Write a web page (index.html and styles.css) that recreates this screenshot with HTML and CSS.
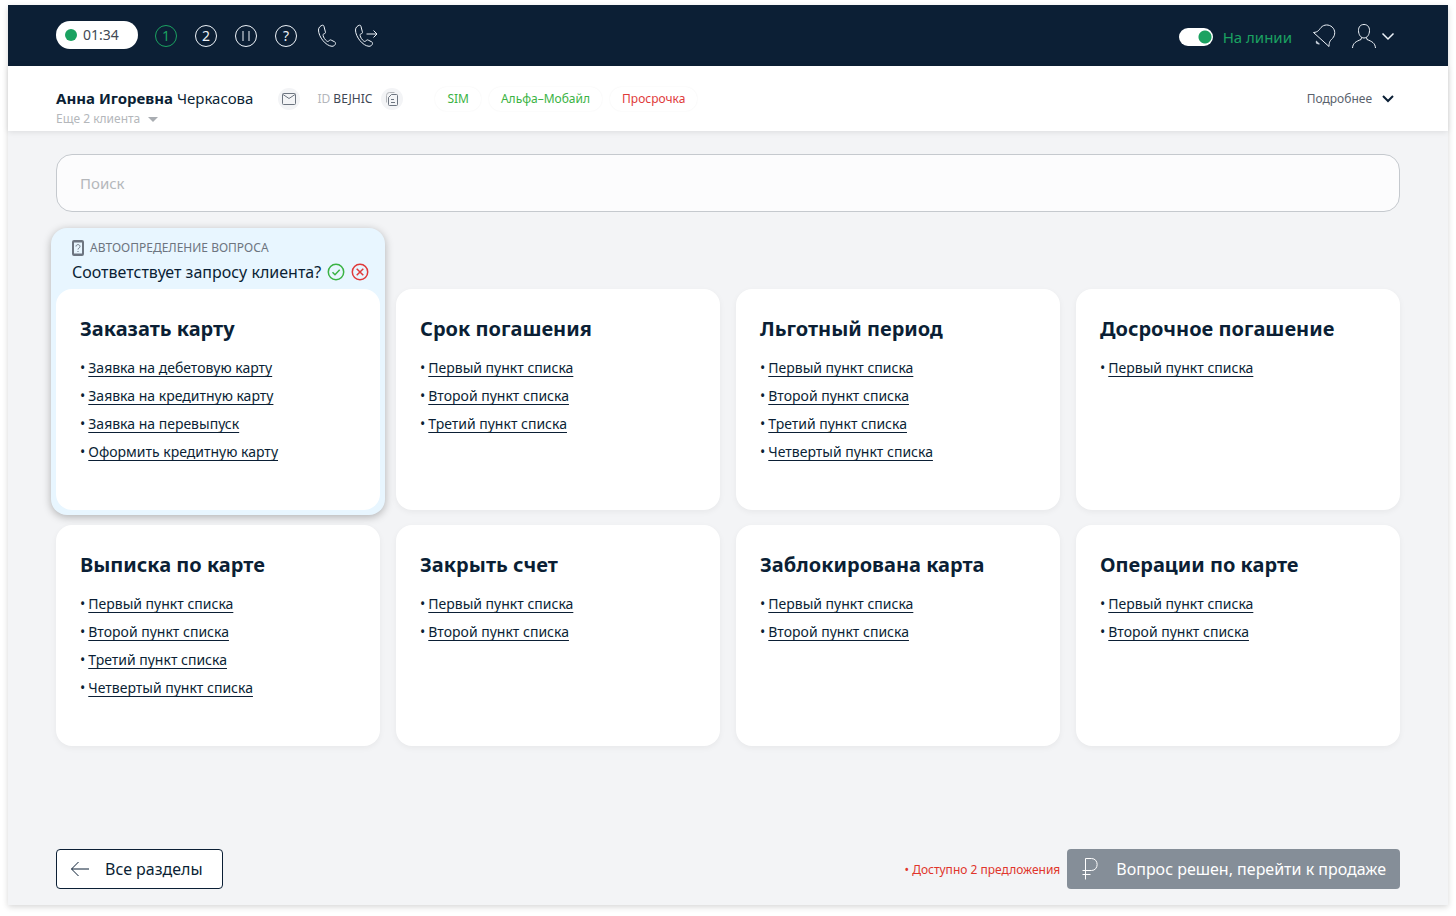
FILE: index.html
```html
<!DOCTYPE html>
<html lang="ru">
<head>
<meta charset="utf-8">
<title>Обращение клиента</title>
<link rel="stylesheet" href="styles.css">
</head>
<body>
<div class="shell">
  <header class="topbar">
    <div class="timer"><span class="timer-dot"></span>01:34</div>
    <nav class="tools" aria-label="Управление звонком">
      <button class="round round-active" type="button">1</button>
      <button class="round" type="button">2</button>
      <button class="round" type="button" aria-label="Пауза"><svg width="12" height="12" viewBox="0 0 12 12"><path d="M3 1v10M9 1v10"/></svg></button>
      <button class="round" type="button">?</button>
      <button class="icon-btn" type="button" aria-label="Телефон"><svg width="24" height="24" viewBox="0 0 24 24"><path d="M7.500 1.200c-2 .5-4 2.200-4 4.800 0 7 7.500 16 13.500 16.300 1.700 0 3.200-1 3.500-2.800.1-.8-.2-1.300-.9-1.700l-3.400-1.700c-1-.5-1.600-.2-2.100.6-.6.900-1.500 1-2.400.3-1.800-1.400-3.200-3.500-3.600-5.500-.2-1 .2-1.600 1.200-1.800 1-.2 1.300-.8 1.100-1.800l-1.300-5c-.2-1.100-.6-1.900-1.600-1.700z"/></svg></button>
      <button class="icon-btn" type="button" aria-label="Перевести звонок"><svg width="24" height="24" viewBox="0 0 24 24"><path d="M5.500 1.200c-2 .5-4 2.200-4 4.800 0 7 7.500 16 13.500 16.300 1.700 0 3.200-1 3.500-2.800.1-.8-.2-1.300-.9-1.700l-3.400-1.700c-1-.5-1.600-.2-2.100.6-.6.900-1.500 1-2.400.3-1.800-1.400-3.200-3.500-3.600-5.500-.2-1 .2-1.600 1.200-1.800 1-.2 1.300-.8 1.100-1.800l-1.300-5c-.2-1.100-.6-1.900-1.600-1.700zM12.500 10h10.500M19.500 6.500 23 10l-3.500 3.500"/></svg></button>
    </nav>
    <label class="line"><input class="line-toggle" type="checkbox" role="switch" checked>На линии</label>
    <button class="icon-btn bell" type="button" aria-label="Уведомления"><svg width="24" height="24" viewBox="0 0 24 24"><path d="M1.500 8.500C6 8.200 7 6 9 3.500c3-3.300 8-3.300 11.200-.4 3.300 3 3.300 8 .3 11.300-2 2-3.500 3.100-3.500 8.100z"/><path class="solid" d="M4.200 16.500c-1.300 2.200.3 4.600 4 3.800z"/></svg></button>
    <button class="icon-btn profile" type="button" aria-label="Профиль"><svg width="44" height="26" viewBox="0 0 44 26"><path d="M13 1.500c3.600 0 5.500 2.500 5.500 6 0 4-2.200 7.500-5.500 7.500s-5.500-3.500-5.500-7.500c0-3.500 1.900-6 5.500-6zM1.500 25c.4-5 3.500-6.500 8.500-8.500l.5-2M24.500 25c-.4-5-3.500-6.500-8.500-8.500l-.5-2"/><path class="chevron" d="m31.500 10.500 5.500 5.500 5.500-5.500"/></svg></button>
  </header>

  <section class="client">
    <div class="client-id">
      <h1 class="client-name">Анна Игоревна <span>Черкасова</span></h1>
      <button class="client-more" type="button">Еще 2 клиента<span class="caret"></span></button>
    </div>
    <button class="badge" type="button" aria-label="Написать письмо"><svg width="16" height="14" viewBox="0 0 16 14"><rect x="1.500" y="1.500" width="13" height="11" rx="1"/><path d="m2 2.500 6 4 6-4"/></svg></button>
    <p class="code"><span>ID</span> BEJHIC</p>
    <button class="badge" type="button" aria-label="Скопировать ID"><svg width="14" height="16" viewBox="0 0 14 16"><path class="faint" d="M1.500 11.500v-7q0-3 3-3h5"/><path d="M6.500 3.500h5q1 0 1 1v9q0 1-1 1h-7q-1 0-1-1v-7zM6 8.500h3M6 11.500h4"/></svg></button>
    <ul class="tags">
      <li class="tag">SIM</li>
      <li class="tag">Альфа–Мобайл</li>
      <li class="tag tag-alert">Просрочка</li>
    </ul>
    <button class="details" type="button">Подробнее<svg width="14" height="10" viewBox="0 0 14 10"><path d="m2 2 5 5 5-5"/></svg></button>
  </section>

  <main class="content">
    <input class="search" type="search" placeholder="Поиск" aria-label="Поиск">

    <div class="grid">
      <div class="suggest">
        <div class="suggest-head">
          <p class="suggest-label"><svg width="12" height="16" viewBox="0 0 12 16"><rect x="1" y="1" width="10" height="14" rx="1"/><path d="M1 2h10M1 14h10M4 6.500c0-2.500 4-2.500 4 0C8 8 6 8 6 9.500M6 11v1"/></svg>АВТООПРЕДЕЛЕНИЕ ВОПРОСА</p>
          <div class="suggest-row">
            <p class="suggest-text">Соответствует запросу клиента?</p>
            <button class="answer answer-yes" type="button" aria-label="Да"><svg width="18" height="18" viewBox="0 0 18 18"><circle cx="9" cy="9" r="7.700"/><path d="m5.500 9.200 2.500 2.500 4.700-4.900"/></svg></button>
            <button class="answer answer-no" type="button" aria-label="Нет"><svg width="18" height="18" viewBox="0 0 18 18"><circle cx="9" cy="9" r="7.700"/><path d="m5.700 5.700 6.600 6.600M12.300 5.700l-6.600 6.600"/></svg></button>
          </div>
        </div>
        <article class="card card-flat">
          <h2>Заказать карту</h2>
          <ul>
            <li><a href="#">Заявка на дебетовую карту</a></li>
            <li><a href="#">Заявка на кредитную карту</a></li>
            <li><a href="#">Заявка на перевыпуск</a></li>
            <li><a href="#">Оформить кредитную карту</a></li>
          </ul>
        </article>
      </div>
      <article class="card">
        <h2>Срок погашения</h2>
        <ul>
          <li><a href="#">Первый пункт списка</a></li>
          <li><a href="#">Второй пункт списка</a></li>
          <li><a href="#">Третий пункт списка</a></li>
        </ul>
      </article>
      <article class="card">
        <h2>Льготный период</h2>
        <ul>
          <li><a href="#">Первый пункт списка</a></li>
          <li><a href="#">Второй пункт списка</a></li>
          <li><a href="#">Третий пункт списка</a></li>
          <li><a href="#">Четвертый пункт списка</a></li>
        </ul>
      </article>
      <article class="card">
        <h2>Досрочное погашение</h2>
        <ul>
          <li><a href="#">Первый пункт списка</a></li>
        </ul>
      </article>
      <article class="card">
        <h2>Выписка по карте</h2>
        <ul>
          <li><a href="#">Первый пункт списка</a></li>
          <li><a href="#">Второй пункт списка</a></li>
          <li><a href="#">Третий пункт списка</a></li>
          <li><a href="#">Четвертый пункт списка</a></li>
        </ul>
      </article>
      <article class="card">
        <h2>Закрыть счет</h2>
        <ul>
          <li><a href="#">Первый пункт списка</a></li>
          <li><a href="#">Второй пункт списка</a></li>
        </ul>
      </article>
      <article class="card">
        <h2>Заблокирована карта</h2>
        <ul>
          <li><a href="#">Первый пункт списка</a></li>
          <li><a href="#">Второй пункт списка</a></li>
        </ul>
      </article>
      <article class="card">
        <h2>Операции по карте</h2>
        <ul>
          <li><a href="#">Первый пункт списка</a></li>
          <li><a href="#">Второй пункт списка</a></li>
        </ul>
      </article>
    </div>
  </main>

  <footer class="actions">
    <button class="btn btn-back" type="button"><svg width="20" height="16" viewBox="0 0 20 16"><path d="M19 8H1.500M8.500 1l-7 7 7 7"/></svg>Все разделы</button>
    <p class="offers">• Доступно 2 предложения</p>
    <button class="btn btn-next" type="button"><svg width="18" height="22" viewBox="0 0 18 22"><path d="M4.500 21.500v-21h6c7.500 0 7.500 12 0 12H1.500M1.500 16.500h8"/></svg>Вопрос решен, перейти к продаже</button>
  </footer>
</div>
</body>
</html>
```
FILE: styles.css
```css
* {
  box-sizing: border-box;
}

body {
  margin: 0;
  padding: 5px 8px 11px;
  min-height: 100vh;
  display: flex;
  background: #fff;
  color: #0b1f35;
  font-family: "Noto Sans", sans-serif;
  font-size: 13px;
}

h1, h2, p, ul {
  margin: 0;
  padding: 0;
}

ul {
  list-style: none;
}

button {
  margin: 0;
  padding: 0;
  border: 0;
  background: none;
  color: inherit;
  font: inherit;
  cursor: pointer;
}

svg {
  display: block;
  flex: none;
  fill: none;
  stroke: currentColor;
}

.shell {
  flex: 1;
  min-width: 0;
  display: flex;
  flex-direction: column;
  background: #f3f4f6;
  box-shadow: 0 2px 6px rgba(0, 0, 0, 0.16);
}

/* Top bar */
.topbar {
  height: 61px;
  padding: 0 53px 0 48px;
  display: flex;
  align-items: center;
  background: #0c1f35;
  color: #eef3f9;
}

.timer {
  width: 82px;
  height: 28px;
  margin-bottom: 2px;
  padding-left: 9px;
  display: flex;
  align-items: center;
  gap: 6px;
  border-radius: 14px;
  background: #fff;
  color: #3f4854;
  font-size: 14px;
}

.timer-dot {
  width: 12px;
  height: 12px;
  border-radius: 50%;
  background: #1ba261;
}

.tools {
  margin: 0 auto 0 17px;
  display: flex;
  align-items: center;
  gap: 18px;
}

.round {
  width: 22px;
  height: 22px;
  display: grid;
  place-items: center;
  border: 1px solid currentColor;
  border-radius: 50%;
  font-size: 14px;
  line-height: 20px;
}

.round-active {
  color: #1ba261;
}

.icon-btn {
  display: grid;
  place-items: center;
}

.tools .icon-btn + .icon-btn {
  margin-left: -3px;
}

.line {
  margin: 2px 20px 0 0;
  display: flex;
  align-items: center;
  gap: 10px;
  color: #1ba261;
  font-size: 15px;
}

.line-toggle {
  appearance: none;
  width: 34px;
  height: 18px;
  margin: 0;
  border-radius: 9px;
  background: radial-gradient(circle at 26px 9px, #1ba261 6px, #fff 7px);
}

.bell {
  margin-right: 15px;
}

.solid {
  fill: #c3ccd8;
  stroke: none;
}

.chevron {
  stroke-width: 1.5;
}

/* Client bar */
.client {
  height: 65px;
  padding: 0 53px 0 48px;
  display: flex;
  align-items: center;
  background: #fff;
  box-shadow: 0 1px 6px rgba(0, 0, 0, 0.1);
}

.client-id {
  padding-top: 20px;
  align-self: flex-start;
}

.client-name {
  font-size: 15px;
  line-height: 24px;
}

.client-name span {
  font-weight: 400;
}

.client-more {
  display: flex;
  align-items: center;
  gap: 8px;
  color: #b4b7bb;
  font-size: 12px;
  line-height: 18px;
}

.caret {
  border: 5px solid transparent;
  border-top-color: #a9adb2;
  border-bottom-width: 0;
}

.badge {
  width: 22px;
  height: 22px;
  margin-left: 25px;
  display: grid;
  place-items: center;
  border-radius: 50%;
  background: #f3f4f6;
  color: #6d7580;
}

.faint {
  stroke: #b4b7bb;
}

.code {
  margin-left: 17px;
  color: #3f4854;
  font-size: 12px;
}

.code span {
  color: #b4b7bb;
}

.code + .badge {
  margin-left: 9px;
}

.tags {
  margin: 0 auto 0 32px;
  display: flex;
  gap: 8px;
}

.tag {
  padding: 0 12px;
  border-radius: 13px;
  box-shadow: 0 0 2px rgba(0, 0, 0, 0.06);
  color: #3bb344;
  font-size: 12px;
  line-height: 24px;
}

.tag-alert {
  color: #e03a3a;
}

.details {
  display: flex;
  align-items: center;
  gap: 9px;
  color: #5a626d;
  font-size: 12px;
}

.details svg {
  color: #0b1f35;
  stroke-width: 2;
}

/* Content */
.content {
  flex: 1;
  padding: 23px 48px 24px;
}

.search {
  appearance: none;
  display: block;
  width: 100%;
  height: 58px;
  padding: 0 23px;
  border: 1px solid #c5c9ce;
  border-radius: 16px;
  background: #fcfcfd;
  color: inherit;
  font: inherit;
  font-size: 15px;
}

.search::placeholder {
  color: #b4b7bb;
}

.grid {
  margin-top: 16px;
  display: grid;
  grid-template-columns: repeat(4, minmax(0, 1fr));
  align-items: end;
  gap: 15px 16px;
}

.card {
  min-height: 221px;
  padding: 24px;
  border-radius: 16px;
  background: #fff;
  box-shadow: 0 2px 6px rgba(0, 0, 0, 0.05);
}

.card-flat {
  box-shadow: none;
}

.card h2 {
  font-size: 20px;
  line-height: 32px;
}

.card ul {
  margin-top: 9px;
}

.card li {
  display: flex;
  gap: 3px;
  font-size: 14px;
  line-height: 28px;
}

.card li::before {
  content: "•";
}

.card a {
  color: inherit;
  text-underline-offset: 3px;
}

.suggest {
  margin: 0 -5px -5px;
  padding: 0 5px 5px;
  border-radius: 16px;
  background: #e8f6ff;
  box-shadow: 0 2px 8px rgba(0, 0, 0, 0.28);
}

.suggest-head {
  height: 61px;
  padding: 10px 12px 0 16px;
}

.suggest-label {
  display: flex;
  align-items: center;
  gap: 6px;
  color: #6d7580;
  font-size: 12px;
  line-height: 20px;
}

.suggest-label rect {
  stroke-width: 2;
}

.suggest-row {
  display: flex;
  align-items: center;
  gap: 6px;
}

.suggest-text {
  margin-right: auto;
  font-size: 16px;
  line-height: 28px;
  white-space: nowrap;
}

.answer svg {
  stroke-width: 1.5;
}

.answer-yes {
  color: #3bb344;
}

.answer-no {
  color: #e03a3a;
}

/* Footer */
.actions {
  padding: 0 48px 16px;
  display: flex;
  align-items: center;
}

.btn {
  height: 40px;
  display: flex;
  align-items: center;
  border-radius: 4px;
  font-size: 16px;
}

.btn-back {
  margin-right: auto;
  padding: 0 19px 0 13px;
  gap: 15px;
  border: 1px solid #0b1f35;
  background: #fff;
}

.offers {
  margin-right: 7px;
  color: #e0352b;
  font-size: 12px;
}

.btn-next {
  padding: 0 14px;
  gap: 17px;
  background: #858e98;
  color: #fff;
}
```
